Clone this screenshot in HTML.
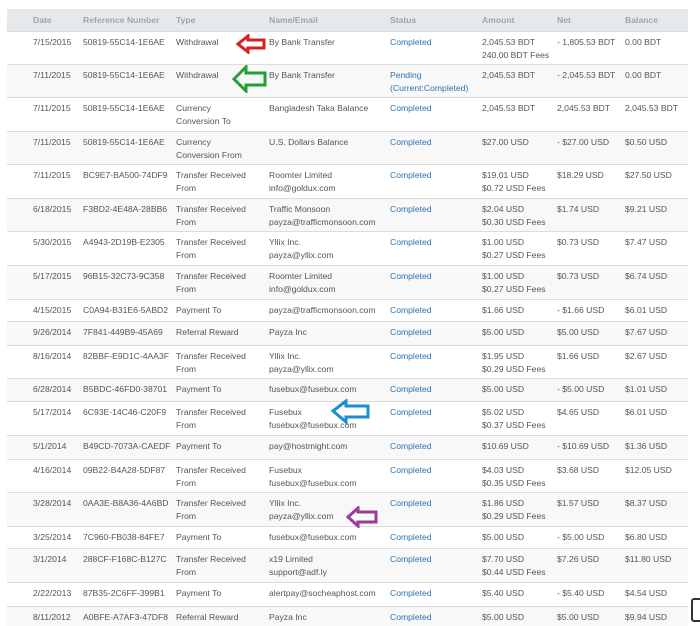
<!DOCTYPE html><html><head><meta charset="utf-8"><style>
body{margin:0;width:700px;height:626px;background:#fff;position:relative;overflow:hidden;font-family:"Liberation Sans",sans-serif;font-size:8.6px;color:#555}
.r{position:absolute;left:7px;width:681px;border-top:1px solid #dcdcdc;box-sizing:border-box}
.r div{position:absolute;top:4px;line-height:13px;white-space:nowrap}
.h{background:#e6e9ec;border:none;color:#a0a4a8;font-weight:bold}
.h div{top:5px}
.a{background:#f8f8f8}
.c0{left:26px}.c1{left:76px}.c2{left:169px}.c3{left:262px}.c4{left:383px;color:#2f72ad}.c5{left:475px}.c6{left:550px}.c7{left:618px}
svg{position:absolute}
</style></head><body>
<div class="r h" style="top:9px;height:22px"><div class="c0">Date</div><div class="c1">Reference Number</div><div class="c2">Type</div><div class="c3">Name/Email</div><div class="c4" style="color:#a0a4a8">Status</div><div class="c5">Amount</div><div class="c6">Net</div><div class="c7">Balance</div></div>

<div class="r" style="top:31px;height:33px"><div class="c0">7/15/2015</div><div class="c1">50819-55C14-1E6AE</div><div class="c2">Withdrawal</div><div class="c3">By Bank Transfer</div><div class="c4">Completed</div><div class="c5">2,045.53 BDT<br>240.00 BDT Fees</div><div class="c6">- 1,805.53 BDT</div><div class="c7">0.00 BDT</div></div>
<div class="r a" style="top:64px;height:33px"><div class="c0">7/11/2015</div><div class="c1">50819-55C14-1E6AE</div><div class="c2">Withdrawal</div><div class="c3">By Bank Transfer</div><div class="c4">Pending<br>(Current:Completed)</div><div class="c5">2,045.53 BDT</div><div class="c6">- 2,045.53 BDT</div><div class="c7">0.00 BDT</div></div>
<div class="r" style="top:97px;height:34px"><div class="c0">7/11/2015</div><div class="c1">50819-55C14-1E6AE</div><div class="c2">Currency<br>Conversion To</div><div class="c3">Bangladesh Taka Balance</div><div class="c4">Completed</div><div class="c5">2,045.53 BDT</div><div class="c6">2,045.53 BDT</div><div class="c7">2,045.53 BDT</div></div>
<div class="r a" style="top:131px;height:33px"><div class="c0">7/11/2015</div><div class="c1">50819-55C14-1E6AE</div><div class="c2">Currency<br>Conversion From</div><div class="c3">U.S. Dollars Balance</div><div class="c4">Completed</div><div class="c5">$27.00 USD</div><div class="c6">- $27.00 USD</div><div class="c7">$0.50 USD</div></div>
<div class="r" style="top:164px;height:34px"><div class="c0">7/11/2015</div><div class="c1">BC9E7-BA500-74DF9</div><div class="c2">Transfer Received<br>From</div><div class="c3">Roomter Limited<br>info@goldux.com</div><div class="c4">Completed</div><div class="c5">$19.01 USD<br>$0.72 USD Fees</div><div class="c6">$18.29 USD</div><div class="c7">$27.50 USD</div></div>
<div class="r a" style="top:198px;height:33px"><div class="c0">6/18/2015</div><div class="c1">F3BD2-4E48A-28BB6</div><div class="c2">Transfer Received<br>From</div><div class="c3">Traffic Monsoon<br>payza@trafficmonsoon.com</div><div class="c4">Completed</div><div class="c5">$2.04 USD<br>$0.30 USD Fees</div><div class="c6">$1.74 USD</div><div class="c7">$9.21 USD</div></div>
<div class="r" style="top:231px;height:34px"><div class="c0">5/30/2015</div><div class="c1">A4943-2D19B-E2305</div><div class="c2">Transfer Received<br>From</div><div class="c3">Yllix Inc.<br>payza@yllix.com</div><div class="c4">Completed</div><div class="c5">$1.00 USD<br>$0.27 USD Fees</div><div class="c6">$0.73 USD</div><div class="c7">$7.47 USD</div></div>
<div class="r a" style="top:265px;height:34px"><div class="c0">5/17/2015</div><div class="c1">96B15-32C73-9C358</div><div class="c2">Transfer Received<br>From</div><div class="c3">Roomter Limited<br>info@goldux.com</div><div class="c4">Completed</div><div class="c5">$1.00 USD<br>$0.27 USD Fees</div><div class="c6">$0.73 USD</div><div class="c7">$6.74 USD</div></div>
<div class="r" style="top:299px;height:22px"><div class="c0">4/15/2015</div><div class="c1">C0A94-B31E6-5ABD2</div><div class="c2">Payment To</div><div class="c3">payza@trafficmonsoon.com</div><div class="c4">Completed</div><div class="c5">$1.66 USD</div><div class="c6">- $1.66 USD</div><div class="c7">$6.01 USD</div></div>
<div class="r a" style="top:321px;height:24px"><div class="c0">9/26/2014</div><div class="c1">7F841-449B9-45A69</div><div class="c2">Referral Reward</div><div class="c3">Payza Inc</div><div class="c4">Completed</div><div class="c5">$5.00 USD</div><div class="c6">$5.00 USD</div><div class="c7">$7.67 USD</div></div>
<div class="r" style="top:345px;height:33px"><div class="c0">8/16/2014</div><div class="c1">82BBF-E9D1C-4AA3F</div><div class="c2">Transfer Received<br>From</div><div class="c3">Yllix Inc.<br>payza@yllix.com</div><div class="c4">Completed</div><div class="c5">$1.95 USD<br>$0.29 USD Fees</div><div class="c6">$1.66 USD</div><div class="c7">$2.67 USD</div></div>
<div class="r a" style="top:378px;height:23px"><div class="c0">6/28/2014</div><div class="c1">B5BDC-46FD0-38701</div><div class="c2">Payment To</div><div class="c3">fusebux@fusebux.com</div><div class="c4">Completed</div><div class="c5">$5.00 USD</div><div class="c6">- $5.00 USD</div><div class="c7">$1.01 USD</div></div>
<div class="r" style="top:401px;height:34px"><div class="c0">5/17/2014</div><div class="c1">6C93E-14C46-C20F9</div><div class="c2">Transfer Received<br>From</div><div class="c3">Fusebux<br>fusebux@fusebux.com</div><div class="c4">Completed</div><div class="c5">$5.02 USD<br>$0.37 USD Fees</div><div class="c6">$4.65 USD</div><div class="c7">$6.01 USD</div></div>
<div class="r a" style="top:435px;height:24px"><div class="c0">5/1/2014</div><div class="c1">B49CD-7073A-CAEDF</div><div class="c2">Payment To</div><div class="c3">pay@hostmight.com</div><div class="c4">Completed</div><div class="c5">$10.69 USD</div><div class="c6">- $10.69 USD</div><div class="c7">$1.36 USD</div></div>
<div class="r" style="top:459px;height:33px"><div class="c0">4/16/2014</div><div class="c1">09B22-B4A28-5DF87</div><div class="c2">Transfer Received<br>From</div><div class="c3">Fusebux<br>fusebux@fusebux.com</div><div class="c4">Completed</div><div class="c5">$4.03 USD<br>$0.35 USD Fees</div><div class="c6">$3.68 USD</div><div class="c7">$12.05 USD</div></div>
<div class="r a" style="top:492px;height:34px"><div class="c0">3/28/2014</div><div class="c1">0AA3E-B8A36-4A6BD</div><div class="c2">Transfer Received<br>From</div><div class="c3">Yllix Inc.<br>payza@yllix.com</div><div class="c4">Completed</div><div class="c5">$1.86 USD<br>$0.29 USD Fees</div><div class="c6">$1.57 USD</div><div class="c7">$8.37 USD</div></div>
<div class="r" style="top:526px;height:22px"><div class="c0">3/25/2014</div><div class="c1">7C960-FB038-84FE7</div><div class="c2">Payment To</div><div class="c3">fusebux@fusebux.com</div><div class="c4">Completed</div><div class="c5">$5.00 USD</div><div class="c6">- $5.00 USD</div><div class="c7">$6.80 USD</div></div>
<div class="r a" style="top:548px;height:34px"><div class="c0">3/1/2014</div><div class="c1">288CF-F168C-B127C</div><div class="c2">Transfer Received<br>From</div><div class="c3">x19 Limited<br>support@adf.ly</div><div class="c4">Completed</div><div class="c5">$7.70 USD<br>$0.44 USD Fees</div><div class="c6">$7.26 USD</div><div class="c7">$11.80 USD</div></div>
<div class="r" style="top:582px;height:24px"><div class="c0">2/22/2013</div><div class="c1">87B35-2C6FF-399B1</div><div class="c2">Payment To</div><div class="c3">alertpay@socheaphost.com</div><div class="c4">Completed</div><div class="c5">$5.40 USD</div><div class="c6">- $5.40 USD</div><div class="c7">$4.54 USD</div></div>
<div class="r a" style="top:606px;height:20px"><div class="c0">8/11/2012</div><div class="c1">A0BFE-A7AF3-47DF8</div><div class="c2">Referral Reward</div><div class="c3">Payza Inc</div><div class="c4">Completed</div><div class="c5">$5.00 USD</div><div class="c6">$5.00 USD</div><div class="c7">$9.94 USD</div></div>

<svg style="left:236px;top:34px" width="30" height="20" viewBox="0 0 30 20"><path d="M2 10 L12 2 L12 6 L28 6 L28 14 L12 14 L12 18 Z" fill="none" stroke="#d42020" stroke-width="3" stroke-linejoin="miter"/></svg>
<svg style="left:232px;top:65px" width="36" height="28" viewBox="0 0 36 28"><path d="M2 14 L14 2 L14 8 L33 8 L33 20 L14 20 L14 26 Z" fill="none" stroke="#22a035" stroke-width="3"/></svg>
<svg style="left:331px;top:399px" width="40" height="26" viewBox="0 0 40 26"><path d="M2 12 L15 2 L15 7 L37 7 L37 18 L15 18 L15 23 Z" fill="none" stroke="#1a8fd0" stroke-width="3"/></svg>
<svg style="left:346px;top:506px" width="33" height="22" viewBox="0 0 33 22"><path d="M2 11 L12 2 L12 6 L30 6 L30 16 L12 16 L12 20 Z" fill="none" stroke="#9a3d9a" stroke-width="3"/></svg>
<div style="position:absolute;left:691px;top:598px;width:12px;height:24px;border:2px solid #333;border-radius:3px;box-sizing:border-box"></div>
</body></html>
